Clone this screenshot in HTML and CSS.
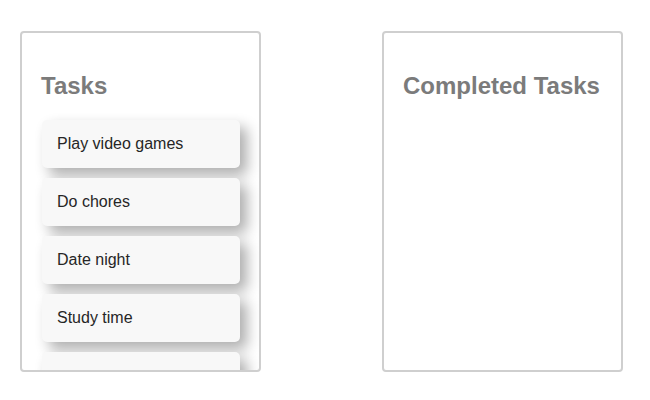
FILE: index.html
```html
<!DOCTYPE html>
<html lang="en">
<head>
<meta charset="utf-8">
<title>Tasks</title>
<link rel="stylesheet" href="styles.css">
</head>
<body>
<main class="board">
  <section class="panel">
    <h2 class="panel-title">Tasks</h2>
    <ul class="task-list">
      <li class="task">Play video games</li>
      <li class="task">Do chores</li>
      <li class="task">Date night</li>
      <li class="task">Study time</li>
      <li class="task"></li>
    </ul>
  </section>
  <section class="panel">
    <h2 class="panel-title">Completed Tasks</h2>
    <ul class="task-list"></ul>
  </section>
</main>
</body>
</html>
```
FILE: styles.css
```css
html, body {
  margin: 0;
  padding: 0;
  background: #ffffff;
}
body {
  font-family: "Liberation Sans", Arial, sans-serif;
}
.board {
  display: flex;
  gap: 121px;
  padding: 31px 20px;
}
.panel {
  width: 241px;
  height: 341px;
  box-sizing: border-box;
  border: 2px solid #cfcfcf;
  border-radius: 4px;
  overflow: hidden;
  padding: 39px 19px 0 19px;
}
.panel-title {
  margin: 0 0 20px 0;
  font-size: 24px;
  font-weight: bold;
  line-height: 28px;
  color: #7b7b7b;
}
.task-list {
  list-style: none;
  margin: 0;
  padding: 0 0 0 1px;
  display: flex;
  flex-direction: column;
  gap: 10px;
}
.task {
  height: 48px;
  box-sizing: border-box;
  display: flex;
  align-items: center;
  padding: 0 15px;
  background: #f8f8f8;
  border-radius: 5px;
  font-size: 16px;
  color: #262626;
  box-shadow: 7px 7px 14px rgba(0, 0, 0, 0.32);
}
```
